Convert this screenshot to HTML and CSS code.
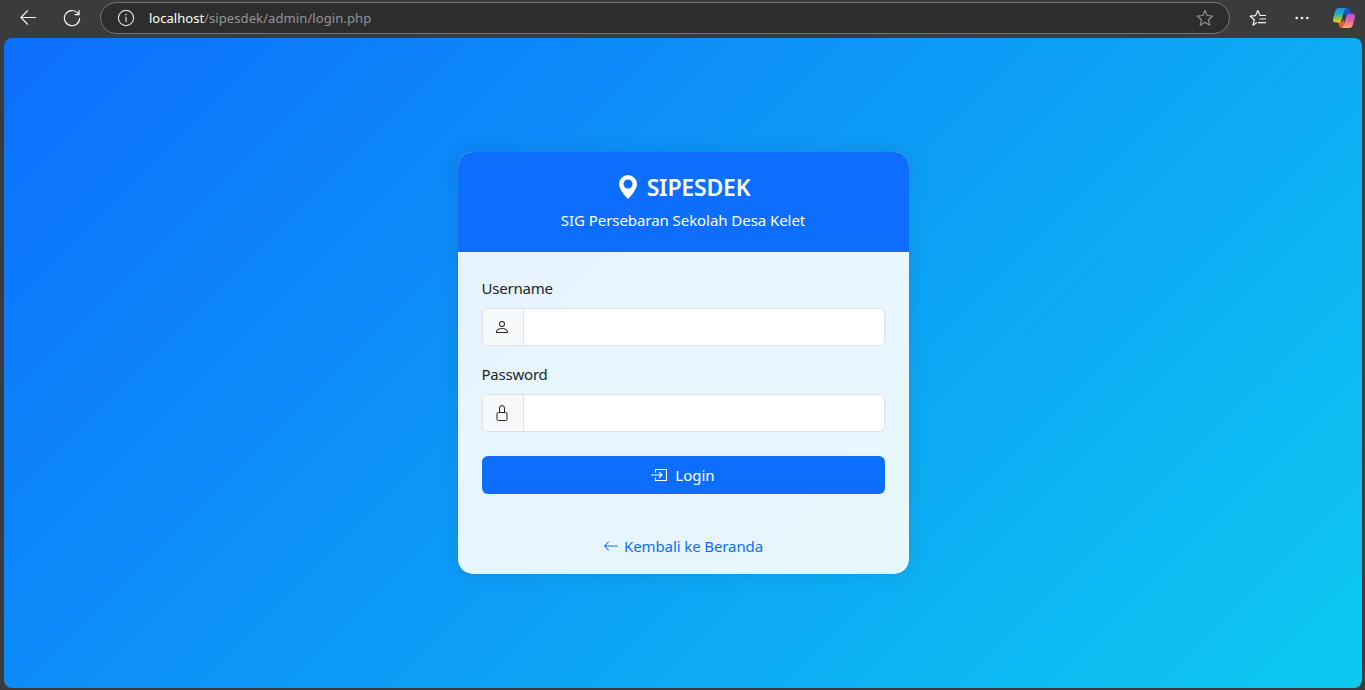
FILE: index.html
```html
<!DOCTYPE html>
<html lang="id">
<head>
<meta charset="utf-8">
<title>Login - SIPESDEK</title>
<link rel="stylesheet" href="styles.css">
</head>
<body>
<header class="toolbar">
  <svg class="nav-icon back" width="16" height="16" viewBox="0 0 16 16" fill="none" stroke="currentColor" stroke-width="1.15"><path d="M16 7.500H.8M7.800.500.8 7.500l7 7"/></svg>
  <svg class="nav-icon reload" width="18" height="18" viewBox="0 0 18 18" fill="none" stroke="currentColor" stroke-width="1.2"><path d="M16.6 9A7.6 7.6 0 1 1 14.8 4.2L16 5.5M16.1 1v4.7h-4.6"/></svg>
  <div class="address">
    <svg width="18" height="18" viewBox="0 0 18 18" fill="none" stroke="#d8d8d8" stroke-width="1.2"><circle cx="9" cy="9" r="7.6"/><path d="M9 7.8V13"/><circle cx="9" cy="5.6" r=".8" fill="#d8d8d8" stroke="none"/></svg>
    <span class="url"><span class="host">localhost</span><span class="path">/sipesdek/admin/login.php</span></span>
    <svg class="star" width="18" height="18" viewBox="0 0 18 18" fill="none" stroke="#929292" stroke-width="1.15" stroke-linejoin="round"><path d="m9 1.5 2.2 5 5.4.5-4.1 3.7 1.3 5.5L9 13.3l-4.8 2.9 1.3-5.5L1.400 7l5.400-.5z"/></svg>
  </div>
  <svg class="nav-icon favorites" width="18" height="18" viewBox="0 0 18 18" fill="none" stroke="currentColor" stroke-width="1.2" stroke-linejoin="round"><path d="M7.800 13.600 4 16.200l1.300-5.400L1.200 7.200l5.400-.6L8.800 1.600l2.300 4.900H17M10.500 10H17M9 13.600H17"/></svg>
  <svg class="nav-icon more" width="14" height="4" viewBox="0 0 14 4" fill="currentColor"><circle cx="1.700" cy="2" r="1.300"/><circle cx="7" cy="2" r="1.300"/><circle cx="12.300" cy="2" r="1.300"/></svg>
  <svg class="copilot" width="22" height="20" viewBox="0 0 22 20">
    <defs>
      <linearGradient id="cool" x1="0" y1="0" x2="0" y2="1"><stop offset="0" stop-color="#1b8bea"/><stop offset=".45" stop-color="#20b7bd"/><stop offset=".75" stop-color="#9bc63d"/><stop offset="1" stop-color="#f4c51d"/></linearGradient>
      <linearGradient id="warm" x1="0" y1="0" x2="0" y2="1"><stop offset="0" stop-color="#a052ef"/><stop offset=".5" stop-color="#ee6296"/><stop offset="1" stop-color="#ffaf65"/></linearGradient>
    </defs>
    <path fill="#1856d3" d="M11 0h3q2 0 2.700 2.400L17.700 6H14q-2 0-2.500 2z"/>
    <path fill="#f15a3a" d="M5 14h3q2 0 2.700-2.500L12 20H9q-2 0-2.700-2.300z"/>
    <path fill="url(#cool)" d="M6 0h7q-1.300.8-1.800 2.800L8.600 12q-.6 2.500-3 2.500H3q-3.500 0-2.800-4L2 3.500Q3 0 6 0z"/>
    <path fill="url(#warm)" d="M16 20H9q1.300-.8 1.800-2.800L13.400 8q.6-2.500 3-2.500H19q3.500 0 2.800 4L20 16.500q-1 3.500-4 3.500z"/>
  </svg>
</header>
<main class="page">
  <section class="card">
    <div class="card-header">
      <h1 class="title"><svg width="24" height="24" viewBox="0 0 16 16" fill="currentColor"><path d="M8 16s6-5.686 6-10A6 6 0 0 0 2 6c0 4.314 6 10 6 10m0-7a3 3 0 1 1 0-6 3 3 0 0 1 0 6"/></svg><span>SIPESDEK</span></h1>
      <p class="subtitle">SIG Persebaran Sekolah Desa Kelet</p>
    </div>
    <form class="card-body">
      <label class="label label-user" for="username">Username</label>
      <div class="input-group">
        <span class="addon"><svg width="16" height="16" viewBox="0 0 16 16" fill="currentColor"><path d="M8 8a3 3 0 1 0 0-6 3 3 0 0 0 0 6m2-3a2 2 0 1 1-4 0 2 2 0 0 1 4 0m4 8c0 1-1 1-1 1H3s-1 0-1-1 1-4 6-4 6 3 6 4m-1-.004c-.001-.246-.154-.986-.832-1.664C11.516 10.680 10.289 10 8 10s-3.516.680-4.168 1.332c-.678.678-.830 1.418-.832 1.664z"/></svg></span>
        <input class="field" id="username" type="text">
      </div>
      <label class="label label-pass" for="password">Password</label>
      <div class="input-group">
        <span class="addon"><svg width="16" height="16" viewBox="0 0 16 16" fill="none" stroke="currentColor"><path d="M5.500 7.500V3a2.500 2.500 0 0 1 5 0v4.500"/><rect x="3" y="7.500" width="10" height="8" rx="1.500"/></svg></span>
        <input class="field" id="password" type="password">
      </div>
      <button class="submit" type="button"><svg width="16" height="16" viewBox="0 0 16 16" fill="none" stroke="currentColor" stroke-width="1.15"><path d="M4.500 5.500v-3h11v11h-11v-3M0 8h11M8 5l3 3-3 3"/></svg><span>Login</span></button>
    </form>
    <a class="home"><svg width="16" height="16" viewBox="0 0 16 16" fill="currentColor"><path fill-rule="evenodd" d="M15 8a.5.5 0 0 0-.5-.5H2.707l3.147-3.146a.5.5 0 1 0-.708-.708l-4 4a.5.5 0 0 0 0 .708l4 4a.5.5 0 0 0 .708-.708L2.707 8.500H14.500A.5.5 0 0 0 15 8"/></svg><span>Kembali ke Beranda</span></a>
  </section>
</main>
</body>
</html>
```
FILE: styles.css
```css
* { box-sizing: border-box; }
body {
  margin: 0;
  height: 690px;
  overflow: hidden;
  display: flex;
  flex-direction: column;
  background: #3b3b3b;
  font-family: "Noto Sans", "Open Sans", sans-serif;
  font-size: 15px;
  color: #212529;
}
svg { display: block; flex: none; }
.toolbar {
  height: 38px;
  padding: 0 10px 2px 20px;
  display: flex;
  align-items: center;
  color: #f3f3f3;
}
.reload { margin-left: 27px; }
.address {
  width: 1130px;
  height: 32px;
  margin-left: 19px;
  padding: 0 15px 0 16px;
  display: flex;
  align-items: center;
  border: 1px solid #737373;
  border-radius: 16px;
  background: #2d2d2d;
}
.url { display: flex; margin-left: 14px; font-size: 13px; line-height: 18px; color: #969696; }
.host { width: 55px; color: #fff; letter-spacing: .02px; }
.path { letter-spacing: .1px; }
.star { margin-left: auto; }
.favorites { margin-left: 19px; }
.more { margin-left: 28px; }
.copilot { margin-left: 24px; }
.page {
  width: 1358px;
  height: 650px;
  margin-left: 4px;
  display: flex;
  align-items: center;
  justify-content: center;
  border-radius: 8px;
  background: linear-gradient(135deg, #0d6efd, #0dcaf0);
}
.card {
  width: 451px;
  height: 422px;
  overflow: hidden;
  display: flex;
  flex-direction: column;
  border-radius: 15px;
  background: rgba(255, 255, 255, .9);
  box-shadow: 0 0 20px rgba(0, 0, 0, .1);
}
.card-header {
  height: 100px;
  padding-top: 20px;
  display: flex;
  flex-direction: column;
  align-items: center;
  background: #0d6efd;
  color: #fff;
}
.title {
  height: 30px;
  margin: 0;
  display: flex;
  align-items: center;
  gap: 7px;
  font-size: 23px;
  line-height: 30px;
  font-weight: 600;
  letter-spacing: -.2px;
}
.subtitle { margin: 6px 0 0; line-height: 24px; letter-spacing: -.06px; }
.card-body { padding: 24px 24px 0; display: flex; flex-direction: column; }
.label { height: 24px; line-height: 24px; margin-bottom: 8px; letter-spacing: -.22px; }
.label-pass { margin-top: 16px; }
.input-group {
  height: 38px;
  display: flex;
  overflow: hidden;
  border: 1px solid #dee2e6;
  border-radius: 6px;
  background: #fff;
}
.addon {
  width: 41px;
  padding-right: 1px;
  display: flex;
  align-items: center;
  justify-content: center;
  border-right: 1px solid #dee2e6;
  background: #f8f9fa;
}
.field { flex: 1; min-width: 0; padding: 0 12px; border: 0; outline: 0; font: inherit; }
.submit {
  height: 38px;
  margin-top: 24px;
  padding: 0;
  display: flex;
  align-items: center;
  justify-content: center;
  gap: 8px;
  border: 0;
  border-radius: 6px;
  background: #0d6efd;
  color: #fff;
  font: inherit;
}
.home {
  margin-top: 40px;
  height: 24px;
  display: flex;
  align-items: center;
  justify-content: center;
  gap: 5px;
  line-height: 24px;
  color: #0d6efd;
  letter-spacing: -.1px;
}
```
